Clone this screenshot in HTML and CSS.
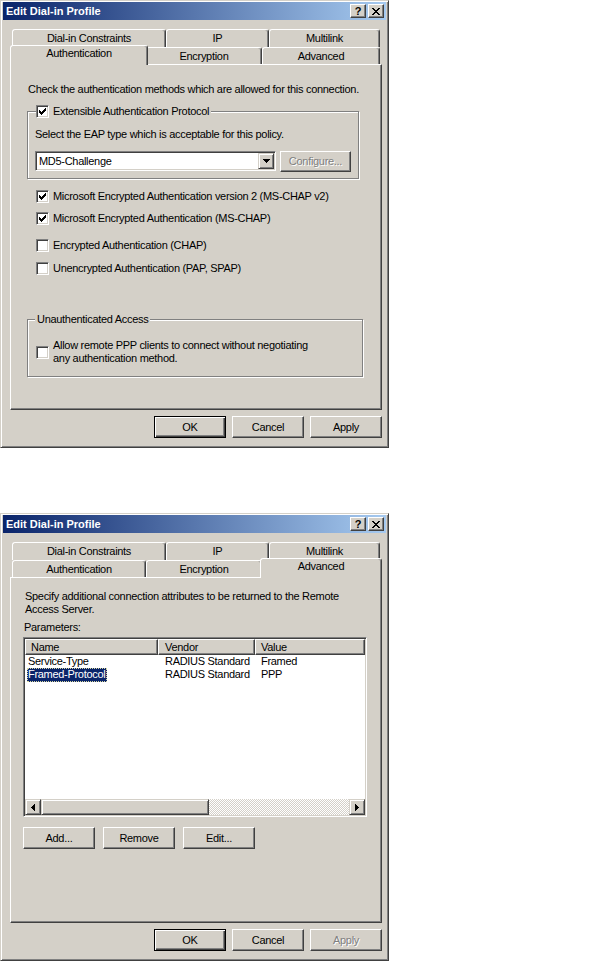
FILE: index.html
```html
<!DOCTYPE html>
<html lang="en">
<head>
    <meta charset="UTF-8">
    <title>Edit Dial-in Profile</title>
    <link rel="stylesheet" href="styles.css">
</head>
<body>
    <!-- Authentication tab -->
    <div class="dialog">
        <div class="titlebar">
            <span>Edit Dial-in Profile</span>
            <div class="caption">
                <span class="cap-btn">?</span>
                <span class="cap-btn"><svg width="8" height="7" viewBox="0 0 8 7"><path d="M0 0h2v1h-2z M6 0h2v1h-2z M1 1h2v1h-2z M5 1h2v1h-2z M2 2h4v1h-4z M3 3h2v1h-2z M2 4h4v1h-4z M1 5h2v1h-2z M5 5h2v1h-2z M0 6h2v1h-2z M6 6h2v1h-2z" fill="#000"/></svg></span>
            </div>
        </div>

        <div class="tabs">
            <div class="tab-row back">
                <div class="tab t-dial">Dial-in Constraints</div>
                <div class="tab t-ip">IP</div>
                <div class="tab t-multi">Multilink</div>
            </div>
            <div class="tab-row front">
                <div class="tab t-auth active">Authentication</div>
                <div class="tab t-enc">Encryption</div>
                <div class="tab t-adv">Advanced</div>
            </div>
        </div>

        <div class="panel auth-page">
            <p>Check the authentication methods which are allowed for this connection.</p>

            <div class="group eap-group">
                <div class="legend">
                    <span class="checkbox"><svg width="7" height="7" viewBox="0 0 7 7"><path d="M0 2h1v1h1v1h1v-1h1v-1h1v-1h1v-1h1v3h-1v1h-1v1h-1v1h-1v1h-1v-1h-1v-1h-1z" fill="#000"/></svg></span>
                    <span>Extensible Authentication Protocol</span>
                </div>
                <p>Select the EAP type which is acceptable for this policy.</p>
                <div class="combo-row">
                    <div class="combo">
                        <span class="combo-text">MD5-Challenge</span>
                        <span class="combo-btn"><svg width="7" height="4" viewBox="0 0 7 4"><path d="M0 0h7v1h-1v1h-1v1h-1v1h-1v-1h-1v-1h-1v-1h-1z" fill="#000"/></svg></span>
                    </div>
                    <button class="btn btn-config" disabled>Configure...</button>
                </div>
            </div>

            <div class="checks">
                <div class="check-row">
                    <span class="checkbox"><svg width="7" height="7" viewBox="0 0 7 7"><path d="M0 2h1v1h1v1h1v-1h1v-1h1v-1h1v-1h1v3h-1v1h-1v1h-1v1h-1v1h-1v-1h-1v-1h-1z" fill="#000"/></svg></span>
                    <span>Microsoft Encrypted Authentication version 2 (MS-CHAP v2)</span>
                </div>
                <div class="check-row row-2">
                    <span class="checkbox"><svg width="7" height="7" viewBox="0 0 7 7"><path d="M0 2h1v1h1v1h1v-1h1v-1h1v-1h1v-1h1v3h-1v1h-1v1h-1v1h-1v1h-1v-1h-1v-1h-1z" fill="#000"/></svg></span>
                    <span>Microsoft Encrypted Authentication (MS-CHAP)</span>
                </div>
                <div class="check-row row-3">
                    <span class="checkbox"></span>
                    <span>Encrypted Authentication (CHAP)</span>
                </div>
                <div class="check-row row-4">
                    <span class="checkbox"></span>
                    <span>Unencrypted Authentication (PAP, SPAP)</span>
                </div>
            </div>

            <div class="group unauth-group">
                <div class="legend legend-text">Unauthenticated Access</div>
                <div class="check-row multi">
                    <span class="checkbox"></span>
                    <span>Allow remote PPP clients to connect without negotiating<br>any authentication method.</span>
                </div>
            </div>
        </div>

        <div class="dialog-buttons">
            <button class="btn default">OK</button>
            <button class="btn">Cancel</button>
            <button class="btn">Apply</button>
        </div>
    </div>

    <!-- Advanced tab -->
    <div class="dialog">
        <div class="titlebar">
            <span>Edit Dial-in Profile</span>
            <div class="caption">
                <span class="cap-btn">?</span>
                <span class="cap-btn"><svg width="8" height="7" viewBox="0 0 8 7"><path d="M0 0h2v1h-2z M6 0h2v1h-2z M1 1h2v1h-2z M5 1h2v1h-2z M2 2h4v1h-4z M3 3h2v1h-2z M2 4h4v1h-4z M1 5h2v1h-2z M5 5h2v1h-2z M0 6h2v1h-2z M6 6h2v1h-2z" fill="#000"/></svg></span>
            </div>
        </div>

        <div class="tabs">
            <div class="tab-row back">
                <div class="tab t-dial">Dial-in Constraints</div>
                <div class="tab t-ip">IP</div>
                <div class="tab t-multi">Multilink</div>
            </div>
            <div class="tab-row front">
                <div class="tab t-auth">Authentication</div>
                <div class="tab t-enc">Encryption</div>
                <div class="tab t-adv active">Advanced</div>
            </div>
        </div>

        <div class="panel params-page">
            <p>Specify additional connection attributes to be returned to the Remote<br>Access Server.</p>
            <p class="param-label">Parameters:</p>

            <div class="listview">
                <div class="lv-header">
                    <div class="lv-col c-name">Name</div>
                    <div class="lv-col c-vendor">Vendor</div>
                    <div class="lv-col c-value">Value</div>
                </div>
                <div class="lv-body">
                    <div class="lv-row">
                        <div class="lv-cell c-name"><span class="item">Service-Type</span></div>
                        <div class="lv-cell c-vendor">RADIUS Standard</div>
                        <div class="lv-cell c-value">Framed</div>
                    </div>
                    <div class="lv-row">
                        <div class="lv-cell c-name"><span class="item sel">Framed-Protocol</span></div>
                        <div class="lv-cell c-vendor">RADIUS Standard</div>
                        <div class="lv-cell c-value">PPP</div>
                    </div>
                </div>
                <div class="hscroll">
                    <span class="sb-btn"><svg width="4" height="7" viewBox="0 0 4 7"><path d="M3 0h1v7h-1v-1h-1v-1h-1v-1h-1v-1h1v-1h1v-1h1z" fill="#000"/></svg></span>
                    <span class="sb-thumb"></span>
                    <span class="sb-track"></span>
                    <span class="sb-btn"><svg width="4" height="7" viewBox="0 0 4 7"><path d="M0 0h1v1h1v1h1v1h1v1h-1v1h-1v1h-1v1h-1z" fill="#000"/></svg></span>
                </div>
            </div>

            <div class="list-buttons">
                <button class="btn">Add...</button>
                <button class="btn">Remove</button>
                <button class="btn">Edit...</button>
            </div>
        </div>

        <div class="dialog-buttons">
            <button class="btn default">OK</button>
            <button class="btn">Cancel</button>
            <button class="btn" disabled>Apply</button>
        </div>
    </div>
</body>
</html>
```

FILE: styles.css
```css
* {
    box-sizing: border-box;
}
body {
    margin: 0;
    background: #fff;
    font-family: "Liberation Sans", Arial, sans-serif;
    font-size: 11px;
    line-height: 13px;
    letter-spacing: -0.3px;
    color: #000;
}
p {
    margin: 0;
    white-space: nowrap;
}
svg {
    display: block;
    shape-rendering: crispEdges;
}

/* window frame */
.dialog {
    width: 389px;
    height: 448px;
    padding: 1px 2px 0 2px;
    background: #d4d0c8;
    border: 1px solid;
    border-color: #d4d0c8 #404040 #404040 #d4d0c8;
    box-shadow: inset 1px 1px #fff, inset -1px -1px #808080;
}
.dialog + .dialog {
    margin-top: 65px;
}
.titlebar {
    height: 18px;
    display: flex;
    align-items: center;
    justify-content: space-between;
    padding: 0 2px 0 3px;
    background: linear-gradient(to right, #0a246a, #a6caf0);
    color: #fff;
    font-weight: bold;
    letter-spacing: 0;
}
.caption {
    display: flex;
    gap: 2px;
}
.cap-btn {
    width: 16px;
    height: 14px;
    display: flex;
    align-items: center;
    justify-content: center;
    color: #000;
    font-size: 11px;
    background: #d4d0c8;
    border: 1px solid;
    border-color: #fff #404040 #404040 #fff;
    box-shadow: inset -1px -1px #808080;
}

/* tabs */
.tabs {
    width: 372px;
    margin: 9px 0 0 7px;
}
.tab-row {
    display: flex;
    padding-left: 2px;
}
.back {
    height: 18px;
}
.front {
    height: 17px;
    align-items: flex-end;
}
.tab {
    flex: none;
    height: 100%;
    text-align: center;
    white-space: nowrap;
    line-height: 16px;
    background: #d4d0c8;
    border: 1px solid;
    border-bottom: 0;
    border-color: #fff #404040 transparent #fff;
    border-radius: 3px 3px 0 0;
    box-shadow: inset -1px 0 #808080;
}
.tab.active {
    position: relative;
    z-index: 1;
    height: 20px;
    margin: 0 -2px -1px;
    line-height: 15px;
}
.t-dial { width: 154px; }
.t-ip { width: 103px; }
.t-multi { width: 111px; }
.t-auth { width: 134px; }
.t-enc { width: 116px; }
.t-adv { width: 118px; }
.t-auth.active { width: 138px; }
.t-adv.active { width: 122px; }

.panel {
    width: 372px;
    height: 346px;
    margin-left: 7px;
    border: 1px solid;
    border-color: #fff #404040 #404040 #fff;
    box-shadow: inset -1px -1px #808080;
}

/* controls */
.btn {
    width: 72px;
    height: 22px;
    padding: 0;
    font: inherit;
    letter-spacing: inherit;
    color: #000;
    background: #d4d0c8;
    border: 1px solid;
    border-color: #fff #404040 #404040 #fff;
    box-shadow: inset -1px -1px #808080;
}
.btn.default {
    border-color: #000;
    box-shadow: inset 1px 1px #fff, inset -1px -1px #404040, inset -2px -2px #808080;
}
.btn:disabled {
    color: #808080;
    text-shadow: 1px 1px 0 #fff;
}
.dialog-buttons {
    display: flex;
    justify-content: flex-end;
    gap: 6px;
    margin: 6px 4px 0 0;
}
.checkbox {
    flex: none;
    width: 13px;
    height: 13px;
    display: flex;
    align-items: center;
    justify-content: center;
    background: #fff;
    border: 1px solid;
    border-color: #808080 #fff #fff #808080;
    box-shadow: inset 1px 1px #404040, inset -1px -1px #d4d0c8;
}
.check-row {
    display: flex;
    align-items: center;
    gap: 4px;
    height: 13px;
    white-space: nowrap;
}
.group {
    position: relative;
    border: 1px solid #808080;
    box-shadow: 1px 1px 0 #fff, inset 1px 1px 0 #fff;
}
.legend {
    position: absolute;
    top: -7px;
    left: 8px;
    height: 13px;
    display: flex;
    align-items: center;
    gap: 4px;
    padding-right: 2px;
    white-space: nowrap;
    background: #d4d0c8;
}
.legend-text {
    left: 7px;
    padding: 0 2px;
}

/* authentication page */
.auth-page {
    padding: 18px 0 0 17px;
}
.eap-group {
    width: 332px;
    margin: 15px 0 0 -1px;
    padding: 16px 0 6px 7px;
}
.combo-row {
    display: flex;
    align-items: flex-start;
    gap: 4px;
    margin-top: 10px;
}
.combo {
    width: 241px;
    height: 20px;
    display: flex;
    padding: 1px;
    background: #fff;
    border: 1px solid;
    border-color: #808080 #fff #fff #808080;
    box-shadow: inset 1px 1px #404040, inset -1px -1px #d4d0c8;
}
.combo-text {
    flex: 1;
    padding-left: 2px;
    line-height: 16px;
}
.combo-btn {
    width: 16px;
    height: 16px;
    display: flex;
    align-items: center;
    justify-content: center;
    background: #d4d0c8;
    border: 1px solid;
    border-color: #d4d0c8 #404040 #404040 #d4d0c8;
    box-shadow: inset 1px 1px #fff, inset -1px -1px #808080;
}
.btn-config {
    width: 71px;
    height: 21px;
}
.checks {
    margin: 11px 0 0 8px;
}
.row-2 { margin-top: 9px; }
.row-3 { margin-top: 14px; }
.row-4 { margin-top: 10px; }
.unauth-group {
    width: 336px;
    margin: 44px 0 0 -1px;
    padding: 19px 0 11px 8px;
}
.check-row.multi {
    height: auto;
}

/* advanced page */
.params-page {
    padding: 12px 0 0 14px;
}
.param-label {
    margin: 5px 0 0 -1px;
}
.listview {
    width: 344px;
    height: 180px;
    margin: 3px 0 0 -2px;
    padding: 1px;
    display: flex;
    flex-direction: column;
    background: #fff;
    border: 1px solid;
    border-color: #808080 #fff #fff #808080;
    box-shadow: inset 1px 1px #404040, inset -1px -1px #d4d0c8;
}
.lv-header {
    display: flex;
    height: 16px;
}
.lv-col {
    height: 16px;
    line-height: 14px;
    padding-left: 5px;
    background: #d4d0c8;
    border: 1px solid;
    border-color: #fff #404040 #404040 #fff;
    box-shadow: inset -1px -1px #808080;
}
.c-name { width: 133px; flex: none; }
.c-vendor { width: 97px; flex: none; padding-left: 6px; }
.c-value { flex: 1; padding-left: 5px; }
.lv-body {
    flex: 1;
}
.lv-row {
    display: flex;
    height: 13px;
    white-space: nowrap;
}
.lv-cell.c-name { padding-left: 2px; }
.lv-cell.c-vendor { padding-left: 7px; }
.lv-cell.c-value { padding-left: 6px; }
.item {
    display: inline-block;
    height: 13px;
    padding: 0 2px 0 1px;
}
.sel {
    height: 14px;
    background: #0a246a;
    color: #fff;
    outline: 1px dotted #d8d8a0;
    outline-offset: -1px;
}
.hscroll {
    display: flex;
    height: 16px;
}
.sb-btn,
.sb-thumb {
    flex: none;
    height: 16px;
    background: #d4d0c8;
    border: 1px solid;
    border-color: #d4d0c8 #404040 #404040 #d4d0c8;
    box-shadow: inset 1px 1px #fff, inset -1px -1px #808080;
}
.sb-btn {
    width: 16px;
    display: flex;
    align-items: center;
    justify-content: center;
}
.sb-thumb {
    width: 168px;
}
.sb-track {
    flex: 1;
    background-color: #fff;
    background-image: conic-gradient(#d4d0c8 25%, #fff 0 50%, #d4d0c8 0 75%, #fff 0);
    background-size: 2px 2px;
}
.list-buttons {
    display: flex;
    gap: 8px;
    margin: 10px 0 0 -2px;
}
```
